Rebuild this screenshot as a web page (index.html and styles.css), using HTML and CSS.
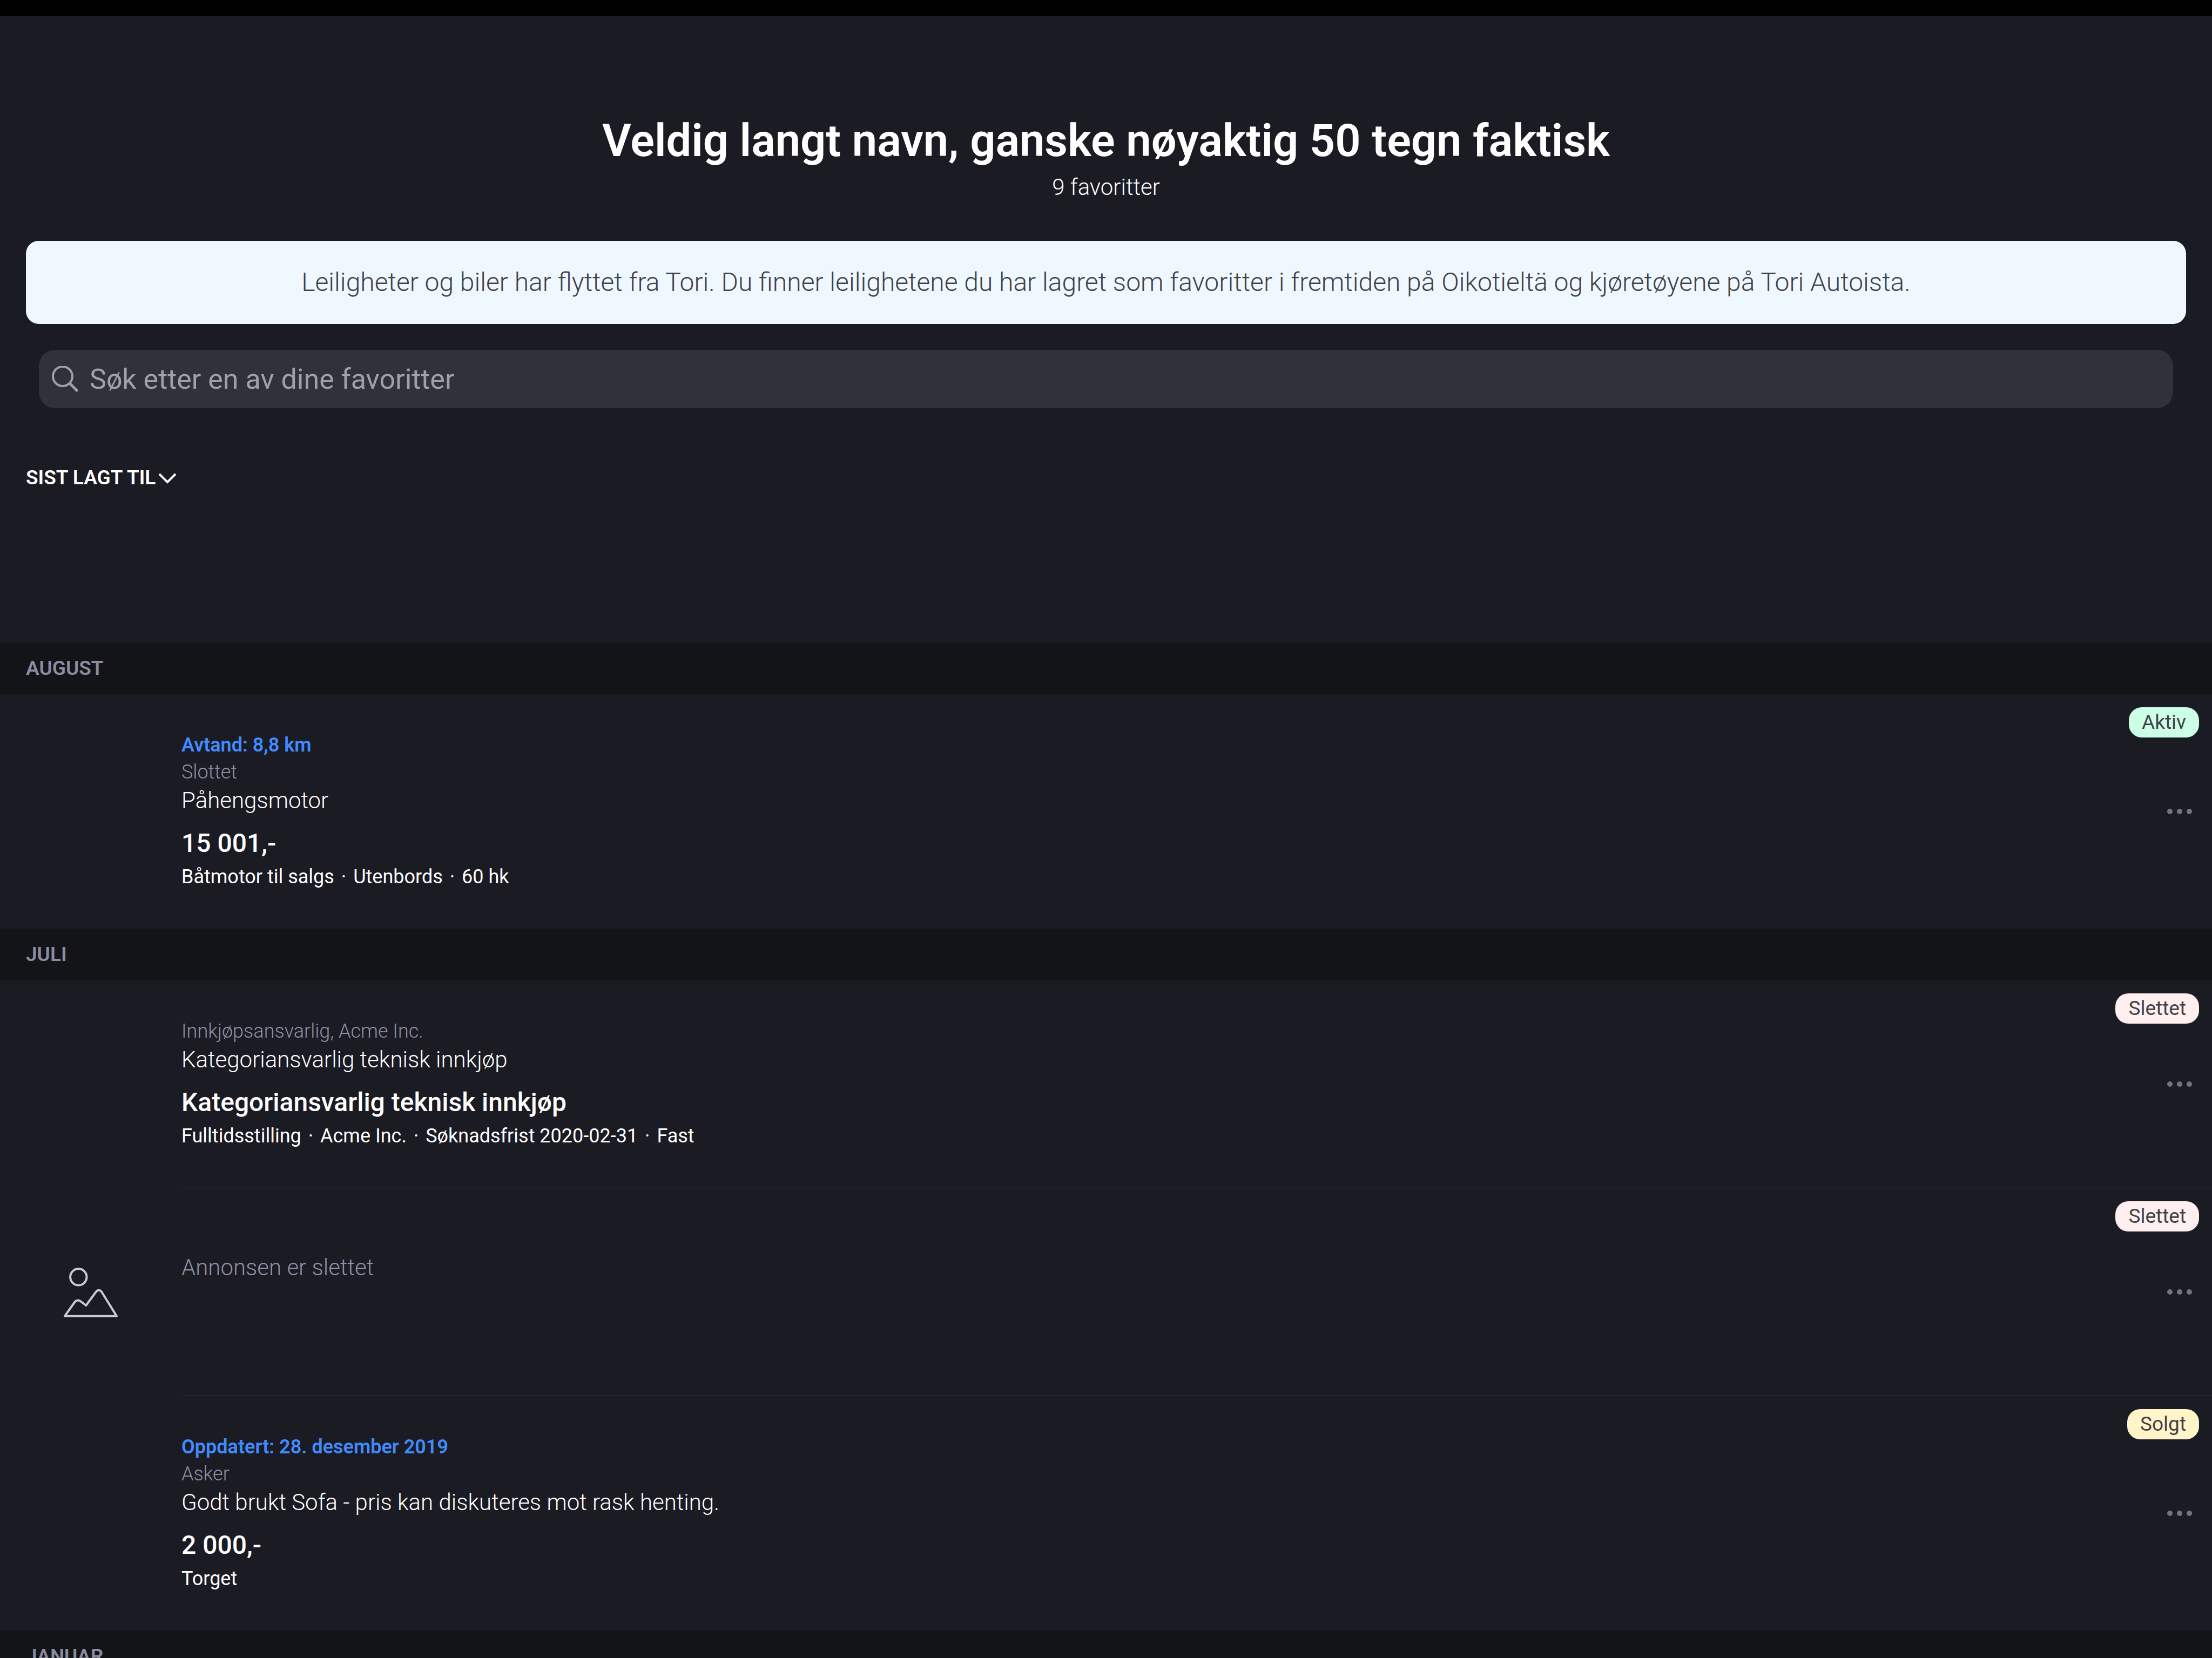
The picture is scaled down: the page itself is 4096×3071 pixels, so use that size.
FILE: index.html
```
<!DOCTYPE html>
<html lang="nb">
<head>
  <meta charset="utf-8">
  <meta name="viewport" content="width=device-width, initial-scale=1">
  <title>Veldig langt navn, ganske nøyaktig 50 tegn faktisk</title>
  <link rel="stylesheet" href="styles.css">
</head>
<body>
  <div class="topbar"></div>
  <main>
    <header class="intro">
      <h1 class="title">Veldig langt navn, ganske nøyaktig 50 tegn faktisk</h1>
      <p class="count">9 favoritter</p>
      <p class="banner">Leiligheter og biler har flyttet fra Tori. Du finner leilighetene du har lagret som favoritter i fremtiden på Oikotieltä og kjøretøyene på Tori Autoista.</p>
      <label class="search">
        <svg class="search-icon" viewBox="0 0 48 48" aria-hidden="true"><circle cx="20" cy="19" r="18"/><path d="M33 32 46 45"/></svg>
        <input class="search-input" type="search" aria-label="Søk" placeholder="Søk etter en av dine favoritter">
      </label>
      <button class="sort" type="button">SIST LAGT TIL<svg class="chevron" viewBox="0 0 36 24" aria-hidden="true"><path d="M3 5 18 20 33 5"/></svg></button>
    </header>

    <section>
      <h2 class="month">AUGUST</h2>
      <ul class="list">
        <li class="row">
          <div class="thumb"></div>
          <div class="body">
            <div class="text">
              <p class="status">Avtand: 8,8 km</p>
              <p class="place">Slottet</p>
              <h3 class="name">Påhengsmotor</h3>
              <p class="price">15 001,-</p>
              <p class="detail">Båtmotor til salgs <span class="dot">·</span> Utenbords <span class="dot">·</span> 60 hk</p>
            </div>
            <span class="badge active">Aktiv</span>
            <button class="more" type="button" aria-label="Mer"><i></i><i></i><i></i></button>
          </div>
        </li>
      </ul>
    </section>

    <section>
      <h2 class="month">JULI</h2>
      <ul class="list">
        <li class="row">
          <div class="thumb"></div>
          <div class="body">
            <div class="text">
              <p class="place">Innkjøpsansvarlig, Acme Inc.</p>
              <h3 class="name">Kategoriansvarlig teknisk innkjøp</h3>
              <p class="price">Kategoriansvarlig teknisk innkjøp</p>
              <p class="detail">Fulltidsstilling <span class="dot">·</span> Acme Inc. <span class="dot">·</span> Søknadsfrist 2020-02-31 <span class="dot">·</span> Fast</p>
            </div>
            <span class="badge deleted">Slettet</span>
            <button class="more" type="button" aria-label="Mer"><i></i><i></i><i></i></button>
          </div>
        </li>
        <li class="row">
          <div class="thumb">
            <svg class="picture" viewBox="0 0 104 96" aria-hidden="true"><circle cx="29.3" cy="19.3" r="15.2"/><path d="M4 91.7 22.5 65.5Q27 60 33.5 64.5L43.3 72 62 46.5Q66.7 41 72 46.5L100 91.7Z"/></svg>
          </div>
          <div class="body">
            <div class="text">
              <p class="place"></p>
              <h3 class="name gone">Annonsen er slettet</h3>
            </div>
            <span class="badge deleted">Slettet</span>
            <button class="more" type="button" aria-label="Mer"><i></i><i></i><i></i></button>
          </div>
        </li>
        <li class="row">
          <div class="thumb"></div>
          <div class="body">
            <div class="text">
              <p class="status">Oppdatert: 28. desember 2019</p>
              <p class="place">Asker</p>
              <h3 class="name">Godt brukt Sofa - pris kan diskuteres mot rask henting.</h3>
              <p class="price">2 000,-</p>
              <p class="detail">Torget</p>
            </div>
            <span class="badge sold">Solgt</span>
            <button class="more" type="button" aria-label="Mer"><i></i><i></i><i></i></button>
          </div>
        </li>
      </ul>
    </section>

    <section>
      <h2 class="month">JANUAR</h2>
    </section>
  </main>
</body>
</html>
```
FILE: styles.css
```
* { box-sizing: border-box; }

html, body { height: 100%; }

body {
  margin: 0;
  display: flex;
  flex-direction: column;
  overflow: hidden;
  background: #1b1b24;
  color: #fff;
  font-family: Roboto, "Liberation Sans", sans-serif;
  font-size: 36px;
  line-height: 50px;
}

h1, h2, h3, p, ul { margin: 0; padding: 0; }

button, input { font: inherit; color: inherit; background: none; border: 0; padding: 0; margin: 0; }

svg { display: block; fill: none; }

.topbar { flex: none; height: 30px; background: #000; }

/* Heading, notice, search and sorting */
.intro {
  display: flex;
  flex-direction: column;
  padding: 183px 48px 280px;
}

.title { font-size: 83px; line-height: 96px; font-weight: 600; text-align: center; }

.count { margin-top: 10px; font-size: 42px; line-height: 56px; font-weight: 300; text-align: center; }

.banner {
  margin-top: 71px;
  padding: 48px;
  border-radius: 24px;
  background: #f0f8ff;
  color: #414147;
  font-size: 48px;
  line-height: 58px;
  font-weight: 300;
  text-align: center;
}

.search {
  display: flex;
  align-items: center;
  gap: 22px;
  height: 108px;
  margin: 48px 24px 0;
  padding: 0 24px;
  border-radius: 30px;
  background: #31313a;
  color: #a0a0aa;
}

.search-icon { flex: none; width: 48px; height: 48px; stroke: currentColor; stroke-width: 4; stroke-linecap: round; }
.search-icon path { stroke-width: 5; }

.search-input { flex: 1; min-width: 0; height: 100%; font-size: 52px; outline: 0; appearance: none; }
.search-input::placeholder { color: inherit; opacity: 1; }

.sort {
  display: flex;
  align-items: center;
  align-self: flex-start;
  gap: 4px;
  margin-top: 104px;
  font-size: 37px;
  font-weight: 600;
}

.chevron { width: 36px; height: 24px; stroke: #fff; stroke-width: 4; }

/* Month groups */
.month {
  height: 96px;
  padding: 23px 48px;
  background: #131418;
  color: #8b8ca1;
  font-size: 37px;
  font-weight: 600;
}

.list { list-style: none; }

.row { display: flex; }

.thumb { flex: none; width: 336px; display: flex; align-items: center; justify-content: center; }

.picture { width: 104px; height: 96px; stroke: #c3ccd9; stroke-width: 4; stroke-linejoin: round; }

.body { flex: 1; min-width: 0; display: grid; grid-template-columns: 1fr auto; }

.row:not(:last-child) .body { border-bottom: 1px solid #393a3e; }

.text { grid-area: 1 / 1; min-height: 384px; padding: 69px 0 71px; }

.status { color: #3f8bff; font-weight: 600; }
.place { min-height: 50px; color: #9090a6; font-weight: 300; }
.name { font-size: 42px; line-height: 56px; font-weight: 300; }
.gone { color: #9090a6; }
.price { margin-top: 22px; font-size: 48px; line-height: 58px; font-weight: 500; }
.detail { margin-top: 8px; }
.dot { margin: 0 4px; }

.badge {
  grid-area: 1 / 2;
  place-self: start end;
  margin: 24px 24px 0 0;
  padding: 3px 24px;
  border-radius: 24px;
  color: #414147;
  font-size: 37px;
}

.active { background: #ccffe5; }
.deleted { background: #ffefef; }
.sold { background: #fff5c8; }

.more { grid-area: 1 / 2; place-self: center end; display: flex; gap: 8px; margin-right: 37px; }
.more i { width: 10px; height: 10px; border-radius: 50%; background: #74747e; }
```
